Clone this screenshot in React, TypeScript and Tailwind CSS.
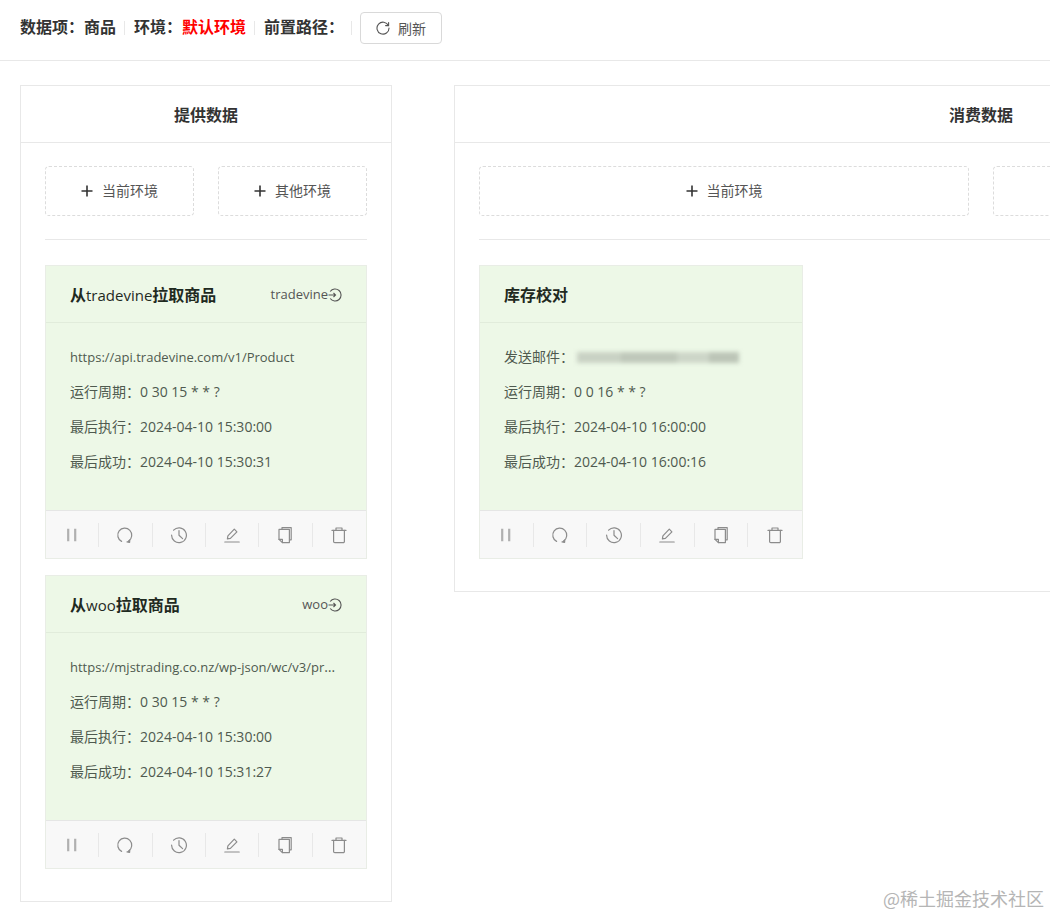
const font = "[font-family:'Open_Sans','Noto_Sans_CJK_SC',sans-serif]";

function Plus() {
  return (
    <svg width="12" height="12" viewBox="0 0 12 12" fill="none" stroke="#333" strokeWidth="1.6">
      <path d="M6 .5v11M.5 6h11" />
    </svg>
  );
}

function Icon({ children }: { children: React.ReactNode }) {
  return (
    <svg width="18" height="18" viewBox="0 0 18 18" fill="none" stroke="#8c8c8c" strokeWidth="1.2" strokeLinecap="round" strokeLinejoin="round">
      {children}
    </svg>
  );
}

const actions = [
  <path key="p" d="M5.2 2.8v12.4M12.2 2.8v12.4" stroke="#b0b0b0" strokeWidth="2.2" strokeLinecap="butt" />,
  <g key="r">
    <path d="M5.6 15.4A7 7 0 1 1 12.6 15" />
    <path d="M11 15.8l2.6.6.2-2.6" fill="#8c8c8c" />
  </g>,
  <g key="c">
    <path d="M3.6 4.2A7.4 7.4 0 1 1 1.6 9" />
    <path d="M9 4.6V9.2l3.6 3.4" />
  </g>,
  <g key="e">
    <path d="M1.8 16h14.4" />
    <path d="M4.4 12.8l.5-3 6.4-6.6 2.6 2.6-6.5 6.6z" />
  </g>,
  <g key="d">
    <path d="M6 3.2V1.6h9.2V13.8h-1.6" />
    <path d="M3 3.4h10.4v13.2H6.4L3 13.4z" />
    <path d="M3 13.4h3.4v3.2" />
  </g>,
  <g key="t">
    <path d="M2 4.4h14" />
    <path d="M6 4.4V2h6v2.4" />
    <path d="M3.6 4.4v11a1.2 1.2 0 0 0 1.2 1.2h8.4a1.2 1.2 0 0 0 1.2-1.2v-11" />
  </g>,
];

function Job({ name, latin, tag, first, rows, wide }: { name: [string, string]; latin?: string; tag?: string; first: React.ReactNode; rows: string[]; wide?: boolean }) {
  return (
    <div className={`flex h-[294px] flex-col border border-[#e9ede6] bg-[#edf8e7] ${wide ? "w-[324px]" : "w-[322px]"}`}>
      <div className="flex h-[57px] shrink-0 items-center justify-between border-b border-[#e1ecdb] px-6 pt-px">
        <span className="text-[16px] font-semibold text-[#1f2a1f]">
          {name[0]}
          {latin && <span className="text-[15px] font-normal">{latin}</span>}
          {name[1]}
        </span>
        {tag && (
          <span className="flex items-center text-[13px] text-[#555]">
            {tag}
            <svg width="14" height="14" viewBox="0 0 14 14" fill="none" stroke="#555" strokeWidth="1.1">
              <path d="M2.2 3.5A6 6 0 1 1 2.2 10.5M.5 7h7M5.5 5l2 2-2 2" />
            </svg>
          </span>
        )}
      </div>
      <div className="flex flex-1 flex-col gap-[13px] px-6 pt-[23px] text-[14px] leading-[22px] text-[#4f5a4f]">
        <div className="truncate">{first}</div>
        {rows.map((r) => (
          <div key={r}>{r}</div>
        ))}
      </div>
      <div className="flex h-[48px] shrink-0 items-center border-t border-[#e5e6e5] bg-[#f8f8f8] pr-px">
        {actions.map((a, i) => (
          <div key={i} className={`flex h-6 flex-1 items-center justify-center ${i < 5 ? "border-r border-[#e8e8e8]" : ""}`}>
            <Icon>{a}</Icon>
          </div>
        ))}
      </div>
    </div>
  );
}

function AddButton({ label, className }: { label: string; className: string }) {
  return (
    <div className={`flex h-[50px] items-center justify-center gap-[9px] rounded border border-dashed border-[#dcdcdc] pb-px text-[14px] text-[#555] ${className}`}>
      <Plus />
      {label}
    </div>
  );
}

function Sep() {
  return <span className="ml-2 mr-[9px] h-3.5 w-px bg-[#e8e8e8]" />;
}

const blurs = ["w-[44px] bg-[#c9d2c4]", "w-[56px] bg-[#bfc8ba]", "w-[32px] bg-[#cdd6c8]", "w-[30px] bg-[#bcc5b7]"];

export default function App() {
  return (
    <div className={`relative h-[918px] w-full overflow-hidden bg-white ${font}`}>
      <header className="flex h-[61px] items-center border-b border-[#e8e8e8] px-5 pb-1 text-[16px] font-semibold text-[#333]">
        <span className="mb-[2px]">数据项：商品</span>
        <Sep />
        <span className="mb-[2px]">环境：<span className="text-[#ff0000]">默认环境</span></span>
        <Sep />
        <span className="mb-[2px]">前置路径：</span>
        <span className="ml-[7px] h-3.5 w-px bg-[#e8e8e8]" />
        <button className="ml-2 flex h-8 w-[82px] items-center justify-center gap-2 rounded border border-[#d9d9d9] text-[14px] font-normal text-[#555]">
          <svg width="14" height="14" viewBox="0 0 14 14" fill="none" stroke="#555" strokeWidth="1.1" strokeLinecap="round">
            <path d="M12.4 4.5A6 6 0 1 0 13 7" />
            <path d="M12.6 1.6v3h-3" />
          </svg>
          刷新
        </button>
      </header>
      <main className="flex w-[1600px] items-start gap-[62px] pl-5 pt-6">
        <section className="w-[372px] shrink-0 border border-[#e8e8e8] bg-white">
          <h2 className="flex h-[57px] items-center justify-center border-b border-[#e8e8e8] pt-0.5 text-[16px] font-semibold text-[#333]">提供数据</h2>
          <div className="px-6 pb-[32px] pt-[23px]">
            <div className="flex gap-6 border-b border-[#e8e8e8] pb-[23px]">
              <AddButton label="当前环境" className="w-[150px]" />
              <AddButton label="其他环境" className="w-[150px]" />
            </div>
            <div className="mt-[25px] flex flex-col gap-4">
              <Job name={["从", "拉取商品"]} latin="tradevine" tag="tradevine" first={<span className="text-[13px]">https://api.tradevine.com/v1/Product</span>} rows={["运行周期：0 30 15 * * ?", "最后执行：2024-04-10 15:30:00", "最后成功：2024-04-10 15:30:31"]} />
              <Job name={["从", "拉取商品"]} latin="woo" tag="woo" first={<span className="text-[13px]">https://mjstrading.co.nz/wp-json/wc/v3/products</span>} rows={["运行周期：0 30 15 * * ?", "最后执行：2024-04-10 15:30:00", "最后成功：2024-04-10 15:31:27"]} />
            </div>
          </div>
        </section>
        <section className="w-[1054px] shrink-0 border border-[#e8e8e8] bg-white">
          <h2 className="flex h-[57px] items-center justify-center border-b border-[#e8e8e8] pt-0.5 text-[16px] font-semibold text-[#333]">消费数据</h2>
          <div className="px-6 pb-[32px] pt-[23px]">
            <div className="flex gap-6 border-b border-[#e8e8e8] pb-[23px]">
              <AddButton label="当前环境" className="w-[491px]" />
              <AddButton label="其他环境" className="w-[491px]" />
            </div>
            <div className="mt-[25px]">
              <Job
                wide
                name={["库存校对", ""]}
                first={
                  <span className="flex items-center">
                    发送邮件：
                    <span className="ml-[3px] flex h-[11px] blur-[2px]">
                      {blurs.map((b) => (
                        <span key={b} className={`h-full ${b}`} />
                      ))}
                    </span>
                  </span>
                }
                rows={["运行周期：0 0 16 * * ?", "最后执行：2024-04-10 16:00:00", "最后成功：2024-04-10 16:00:16"]}
              />
            </div>
          </div>
        </section>
      </main>
      <div className="absolute bottom-[6px] right-[6px] text-[18px] text-[#b5b5b5] [font-family:'Noto_Sans_CJK_SC',sans-serif]">@稀土掘金技术社区</div>
    </div>
  );
}
